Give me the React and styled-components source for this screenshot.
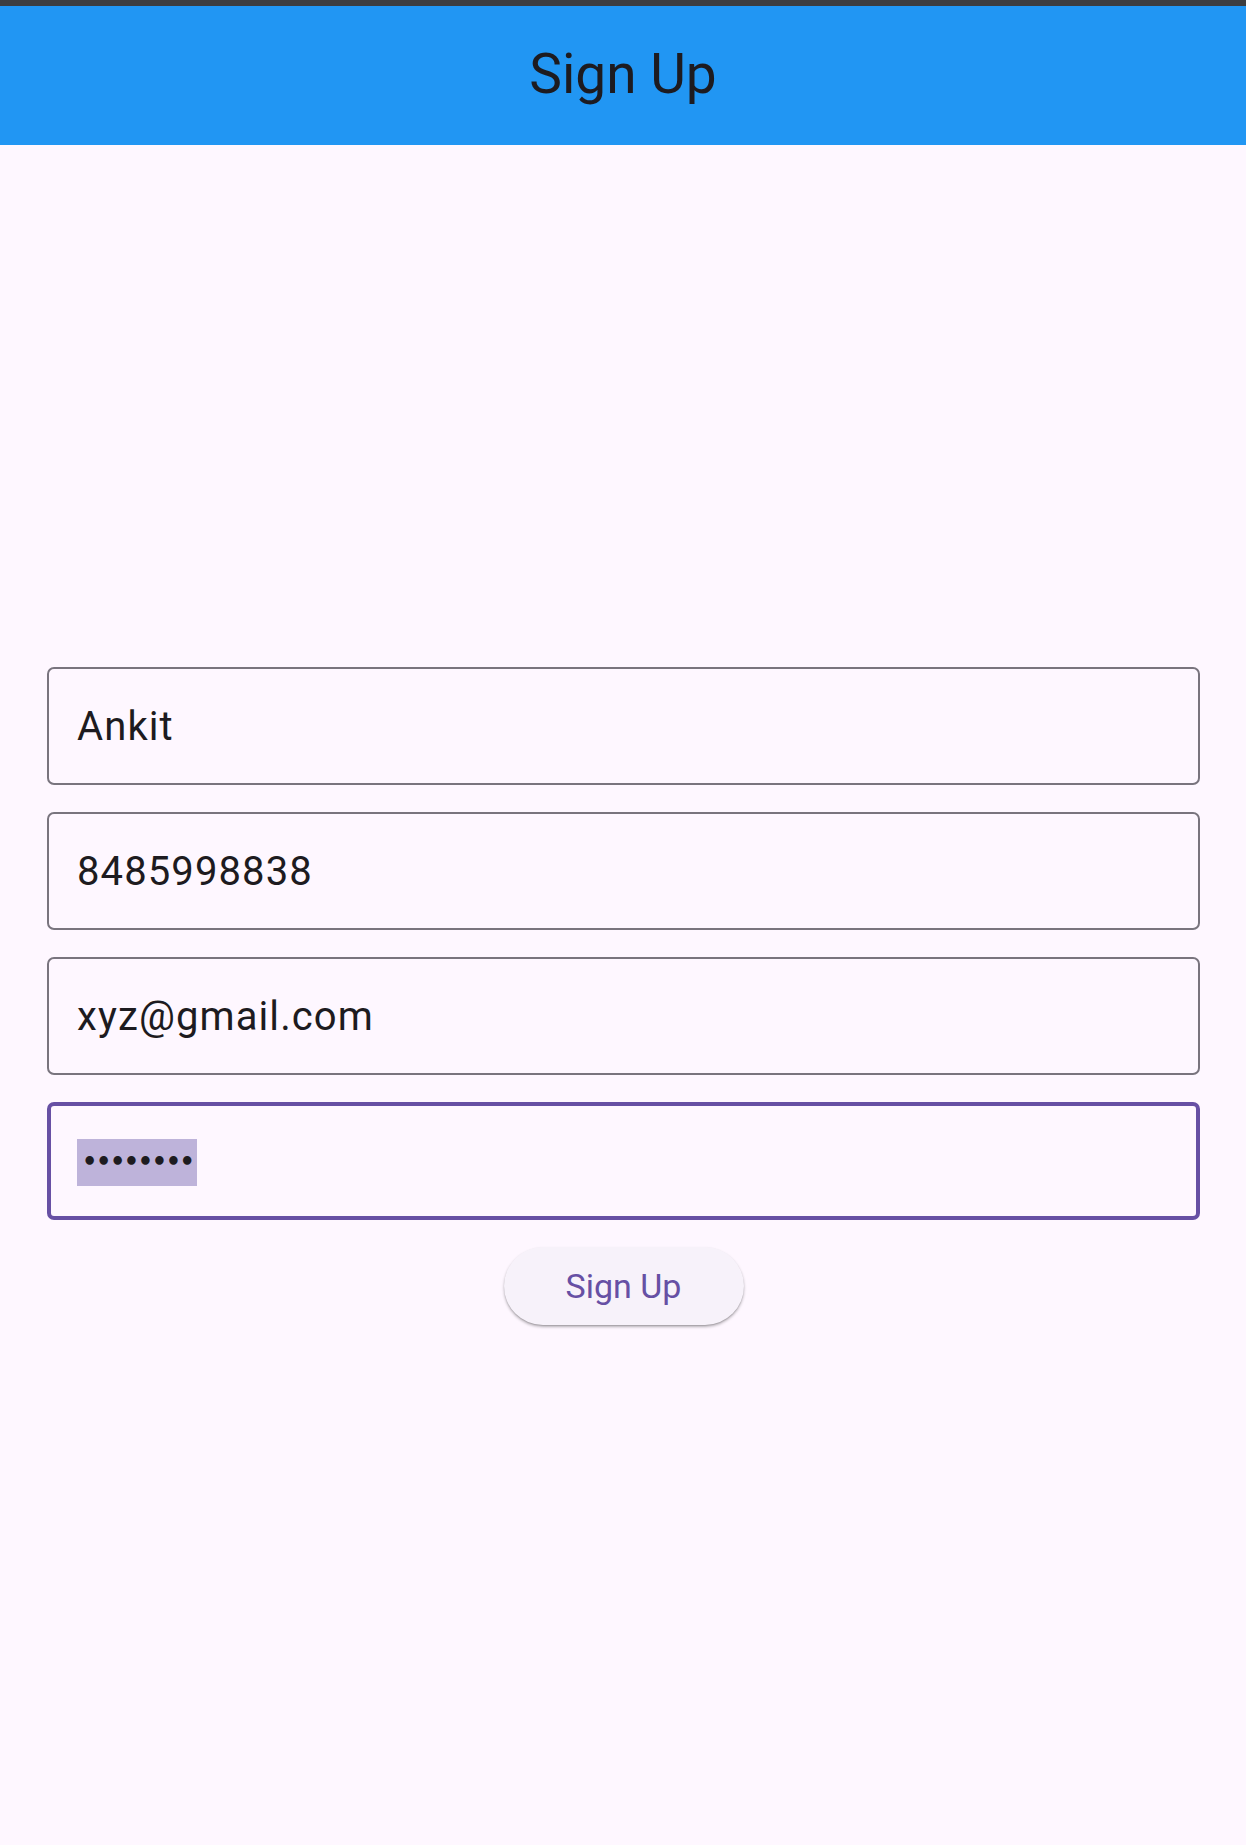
import React from 'react';
import styled, { createGlobalStyle } from 'styled-components';

const GlobalStyle = createGlobalStyle`
  html, body {
    margin: 0;
    padding: 0;
    background: #fef7ff;
    font-family: Roboto, "Liberation Sans", Arial, sans-serif;
  }
`;

const fields = [
  { value: 'Ankit' },
  { value: '8485998838' },
  { value: 'xyz@gmail.com' },
  { value: '••••••••', focused: true, secret: true },
];

const Page = styled.div`
  min-height: 1845px;
  display: flex;
  flex-direction: column;
  background: #fef7ff;
`;

const StatusStrip = styled.div`
  height: 6px;
  background: #3d3d3f;
`;

const AppBar = styled.header`
  height: 139px;
  background: #2196f3;
  display: flex;
  align-items: center;
  justify-content: center;
`;

const Title = styled.h1`
  margin: 0 0 4px;
  font-size: 55px;
  font-weight: 400;
  color: #1d1b20;
`;

const Body = styled.main`
  flex: 1;
  display: flex;
  flex-direction: column;
  justify-content: center;
  padding: 2px 46px 0 47px;
`;

const Form = styled.div`
  display: flex;
  flex-direction: column;
  gap: 27px;
`;

const Field = styled.div`
  height: 118px;
  box-sizing: border-box;
  border: ${({ $focused }) => ($focused ? '4px solid #6750a4' : '2px solid #79747e')};
  border-radius: 7px;
  display: flex;
  align-items: center;
  padding-left: ${({ $focused }) => ($focused ? '26px' : '28px')};
  font-size: 40px;
  letter-spacing: 1.1px;
  color: #1d1b20;
`;

const Selected = styled.span`
  background: #beb3da;
  display: inline-flex;
  align-items: center;
  height: 47px;
  padding: 0 3px 0 5px;
  font-size: 24px;
  letter-spacing: -1.4px;
  font-family: "DejaVu Sans", sans-serif;
  font-weight: 700;
  margin-top: 2px;
`;

const ButtonRow = styled.div`
  display: flex;
  justify-content: center;
  margin-top: 27px;
`;

const Button = styled.button`
  width: 240px;
  height: 78px;
  border: none;
  border-radius: 39px;
  background: #f7f2fa;
  color: #6750a4;
  font-family: Roboto, "Liberation Sans", Arial, sans-serif;
  font-size: 34px;
  font-weight: 400;
  box-shadow: 0 2px 3px rgba(0, 0, 0, 0.28), 0 1px 1px rgba(0, 0, 0, 0.12);
`;

export default function App() {
  return (
    <Page>
      <GlobalStyle />
      <StatusStrip />
      <AppBar>
        <Title>Sign Up</Title>
      </AppBar>
      <Body>
        <Form>
          {fields.map((f) => (
            <Field key={f.value} $focused={f.focused}>
              {f.secret ? <Selected>{f.value}</Selected> : f.value}
            </Field>
          ))}
        </Form>
        <ButtonRow>
          <Button>Sign Up</Button>
        </ButtonRow>
      </Body>
    </Page>
  );
}
